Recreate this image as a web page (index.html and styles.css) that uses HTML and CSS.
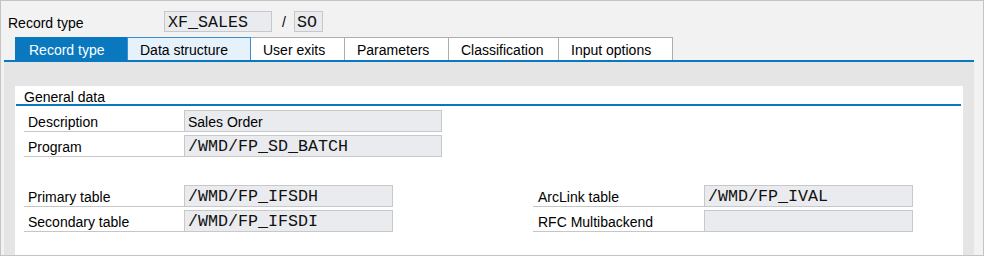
FILE: index.html
```html
<!DOCTYPE html>
<html>
<head>
<meta charset="utf-8">
<link rel="stylesheet" href="styles.css">
</head>
<body>
<div class="window">
  <div class="head-row">
    <span class="head-label">Record type</span>
    <span class="field mono f-key">XF_SALES</span>
    <span class="slash">/</span>
    <span class="field mono f-so">SO</span>
  </div>
  <div class="tabs">
    <div class="tab active">Record type</div>
    <div class="tab hover">Data structure</div>
    <div class="tab">User exits</div>
    <div class="tab">Parameters</div>
    <div class="tab">Classification</div>
    <div class="tab">Input options</div>
  </div>
  <div class="tab-body">
    <div class="group">
      <div class="group-title">General data</div>
      <div class="rows">
        <div class="row">
          <span class="lbl">Description</span>
          <span class="field wide">Sales Order</span>
        </div>
        <div class="row">
          <span class="lbl">Program</span>
          <span class="field wide mono">/WMD/FP_SD_BATCH</span>
        </div>
        <div class="row empty"></div>
        <div class="row">
          <span class="lbl">Primary table</span>
          <span class="field mid mono">/WMD/FP_IFSDH</span>
          <span class="lbl right">ArcLink table</span>
          <span class="field mid mono">/WMD/FP_IVAL</span>
        </div>
        <div class="row">
          <span class="lbl">Secondary table</span>
          <span class="field mid mono">/WMD/FP_IFSDI</span>
          <span class="lbl right">RFC Multibackend</span>
          <span class="field mid mono"></span>
        </div>
      </div>
    </div>
  </div>
</div>
</body>
</html>
```
FILE: styles.css
```css
* { box-sizing: border-box; }
html, body { margin: 0; padding: 0; }
body {
  font-family: "Liberation Sans", Arial, sans-serif;
  font-size: 14px;
  color: #000;
  background: #f2f2f2;
}
.window {
  width: 984px;
  height: 256px;
  border: 1px solid #c4c4c4;
  background: #f2f2f2;
  padding: 10px 9px 0 3px;
  display: flex;
  flex-direction: column;
}
.head-row {
  display: flex;
  align-items: center;
  height: 21px;
}
.head-label {
  width: 160px;
  padding: 2px 0 0 4px;
}
.field {
  display: flex;
  align-items: center;
  height: 22px;
  padding: 1px 0 0 3px;
  background: #e9ebee;
  border: 1px solid #c6c8ca;
  white-space: nowrap;
  overflow: hidden;
}
.head-row .field { height: 21px; }
.mono {
  font-family: "Liberation Mono", "Courier New", monospace;
  font-size: 16.67px;
  color: #111;
}
.f-key { width: 108px; }
.slash { width: 22px; text-align: center; padding: 1px 0 0 2px; }
.f-so { width: 29px; padding-left: 2px; }
.tabs {
  display: grid;
  grid-template-columns: 113px 123px 94px 104px 110px 114px;
  margin-top: 5px;
  padding-left: 11px;
  height: 23px;
}
.tab {
  display: flex;
  align-items: center;
  padding: 2px 0 0 12px;
  background: #fff;
  border: 1px solid #adadad;
  border-bottom: none;
  margin-left: -1px;
  white-space: nowrap;
}
.tab:first-child { margin-left: 0; }
.tab.active {
  background: #0a78bf;
  border-color: #0a78bf;
  color: #fff;
  padding-left: 13px;
}
.tab.hover {
  background: #e5f1fb;
  border-color: #3b8fd0;
  position: relative;
  z-index: 1;
}
.tab-body {
  flex: 1;
  border-top: 2px solid #0a78bf;
  background: #e5e5e5;
  padding: 24px 11px 0 11px;
  display: flex;
}
.group {
  flex: 1;
  background: #fff;
  padding: 0 2px 0 1px;
}
.group-title {
  height: 20px;
  padding: 3px 0 0 8px;
  border-bottom: 2px solid #0a78bf;
  line-height: 16px;
}
.rows {
  padding: 4px 0 0 8px;
  display: flex;
  flex-direction: column;
  gap: 3px;
}
.row {
  display: flex;
  height: 22px;
}
.lbl {
  width: 160px;
  padding: 2px 0 0 4px;
  display: flex;
  align-items: center;
  border-bottom: 1px solid #c6c6c6;
  white-space: nowrap;
}
.lbl.right {
  width: 171px;
  margin-left: 140px;
  padding-left: 5px;
}
.wide { width: 258px; }
.mid { width: 209px; }
```
